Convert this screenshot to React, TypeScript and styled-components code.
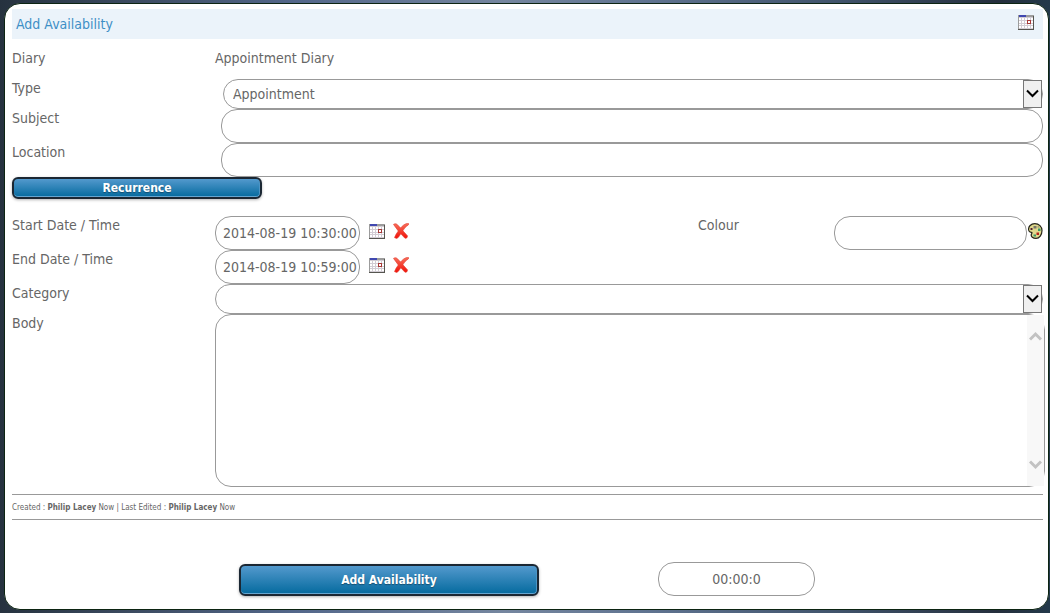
import React from "react";
import styled, { createGlobalStyle, css } from "styled-components";

const line = "#999999";

const GlobalStyle = createGlobalStyle`
  *, *::before, *::after { box-sizing: border-box; }
  body {
    margin: 0;
    background: linear-gradient(90deg, #26323f 0%, #3b4a5f 12%, #53678a 28%, #75869f 48%, #5f7390 62%, #40536b 80%, #252f3d 95%, #23394a 100%);
    color: #666666;
    font: 14px/18px "DejaVu Sans Condensed", Tahoma, sans-serif;
  }
  input, select, textarea, button { font: inherit; color: inherit; margin: 0; }
`;

const Page = styled.main`
  display: flex;
  flex-direction: column;
  min-height: 100vh;
  padding: 3px 1px 3px 4px;
`;

const Panel = styled.form`
  flex: 1;
  padding: 5px 5px 12px 7px;
  background: #ffffff;
  border: 1px solid #0c2412;
  border-radius: 16px;
`;

const Header = styled.header`
  display: flex;
  align-items: center;
  justify-content: space-between;
  height: 30px;
  padding: 0 9px 0 4px;
  margin-bottom: 10px;
  background: #ebf3fa;
`;

const Title = styled.h1`
  margin: 0;
  font-size: 14px;
  font-weight: 400;
  color: #3d8fc6;
`;

const Row = styled.div<{ $split?: boolean }>`
  display: grid;
  grid-template-columns: ${(p) => (p.$split ? "203px 1fr 136px 209px" : "203px 1fr")};
`;

const Label = styled.label``;

const Value = styled.output`
  height: 30px;
`;

const Cell = styled.div<{ $indent?: number }>`
  display: flex;
  position: relative;
  min-width: 0;
  padding-left: ${(p) => p.$indent ?? 0}px;
`;

const field = css`
  background: transparent;
  border: 1px solid ${line};
  border-radius: 16px;
  outline: none;
`;

const TextInput = styled.input<{ $width?: number; $center?: boolean }>`
  ${field}
  flex: ${(p) => (p.$width ? "none" : "1")};
  width: ${(p) => (p.$width ? `${p.$width}px` : "auto")};
  min-width: 0;
  height: 34px;
  padding: ${(p) => (p.$center ? "0 7px" : "0 1px 0 7px")};
  text-align: ${(p) => (p.$center ? "center" : "left")};
`;

const Select = styled.select`
  ${field}
  appearance: none;
  flex: 1;
  min-width: 0;
  height: 30px;
  padding: 0 28px 0 9px;
`;

const Arrow = styled.span`
  position: absolute;
  top: 1px;
  right: 1px;
  display: grid;
  justify-items: center;
  padding-top: 6px;
  width: 19px;
  height: 28px;
  background: #f0f0f0;
  border: 1px solid #777777;
  color: #000000;
  pointer-events: none;
`;

const Body = styled.textarea`
  ${field}
  flex: 1;
  height: 173px;
  margin-right: -2px;
  padding: 8px 24px 8px 8px;
  resize: none;
  overflow: hidden;
`;

const ScrollTrack = styled.span`
  position: absolute;
  top: 1px;
  bottom: 1px;
  right: -1px;
  display: flex;
  flex-direction: column;
  justify-content: space-between;
  align-items: center;
  width: 17px;
  padding: 15px 0;
  background: #f8f8f8;
  color: #c2c2c2;
  pointer-events: none;
`;

const IconButton = styled.button`
  display: block;
  flex: none;
  width: 16px;
  height: 16px;
  padding: 0;
  background: none;
  border: 0;
  cursor: pointer;
  svg { display: block; }
`;

const HeaderIcon = styled(IconButton)`
  margin-bottom: 4px;
`;

const FieldIcons = styled.div<{ $gap: number }>`
  display: flex;
  gap: 8px;
  padding: 7px 0 0 ${(p) => p.$gap}px;
`;

const PrimaryButton = styled.button<{ $width: number; $height: number }>`
  width: ${(p) => p.$width}px;
  height: ${(p) => p.$height}px;
  padding: 0;
  border: 2px solid #1b2733;
  border-radius: 6px;
  background: linear-gradient(#5399cd, #046a9e);
  box-shadow: inset 0 -1px 0 #66a5cf, inset -1px 0 0 #4b94c4, 0 1px 3px rgba(0, 0, 0, 0.3);
  color: #ffffff;
  font-size: 12px;
  font-weight: 700;
  line-height: 16px;
  text-shadow: 0 1px 1px rgba(0, 0, 0, 0.35);
  cursor: pointer;
`;

const Recurrence = styled.div`
  display: flex;
  margin-bottom: 17px;
`;

const Audit = styled.p`
  margin: 7px 0 42px;
  padding: 4px 0 2px;
  height: 26px;
  border: solid ${line};
  border-width: 1px 0;
  font-size: 8px;
`;

const Actions = styled.footer`
  display: flex;
  align-items: flex-end;
  justify-content: center;
  gap: 119px;
  padding-right: 1px;
`;

const CalendarIcon = () => (
  <svg width="16" height="16" viewBox="0 0 16 16" shapeRendering="crispEdges" aria-hidden="true">
    <path fill="#d2ccd4" d="M0 1h16v14H0z" />
    <path fill="#9c9c9c" d="M0 1h16v2H0zM0 1h1v14H0z" />
    <path fill="#4048b0" d="M1 1h7v2H1z" />
    <path fill="#ffffff" d="M1 4h2v2H1zM4 4h2v2H4zM7 4h2v2H7zM10 4h2v2h-2zM13 4h2v2h-2zM1 7h2v2H1zM4 7h2v2H4zM7 7h2v2H7zM10 7h2v2h-2zM13 7h2v2h-2zM1 10h2v1H1zM4 10h2v1H4zM7 10h2v1H7zM10 10h2v1h-2zM13 10h2v1h-2zM1 12h2v2H1zM4 12h2v2H4zM7 12h2v2H7zM10 12h2v2h-2zM13 12h2v2h-2z" />
    <path fill="#55554f" d="M15 2h1v14H0v-1h15z" />
    <path fill="#a83a38" fillRule="evenodd" d="M9 6h4v4H9zM10 7v2h2V7z" />
  </svg>
);

const DeleteIcon = () => (
  <svg width="16" height="16" viewBox="0 0 16 16" aria-hidden="true">
    <defs>
      <linearGradient id="cross" x1="0" y1="0" x2="0" y2="1">
        <stop offset="0" stopColor="#f8705c" />
        <stop offset="1" stopColor="#f01008" />
      </linearGradient>
    </defs>
    <path
      fill="url(#cross)"
      stroke="#e2382a"
      strokeWidth=".6"
      d="M.5 1.400C1.800.4 3.300.6 4.300 1.600L7.500 5C9.500 2.600 11.900.8 14.200.4L15.700.6 15.300 2C13 3.300 11.200 5.500 9.900 7.800L14.600 12.900 13.800 15 12 15.300 7.800 10.800C6.500 12.700 5.200 15 3.700 15.600L1.500 14.600C2.300 12.300 3.600 10.100 5.300 8Z"
    />
  </svg>
);

const PaletteIcon = () => (
  <svg width="16" height="16" viewBox="0 0 16 16" aria-hidden="true">
    <path
      fill="#e0d98c"
      stroke="#25251a"
      strokeWidth="1.200"
      d="M.6 7C.2 3.400 3 .7 6.800.7c4.200 0 7.200 2.900 7.200 6.900 0 4.200-2.600 7.700-6 7.700-3.200 0-5.200-1.700-4.700-3.800.2-.9.900-1.300.6-1.900C3.200 9.200 1 9.700.6 7Z"
    />
    <path fill="#77746a" d="M5.500 3h3v2.500h-3z" />
    <path fill="#522033" d="M2.500 5h2v2h-2z" />
    <path fill="#3a9a68" d="M10 5.500h2.500V8H10zM5.500 11.500H8V13.500H5.500z" />
    <path fill="#b5221c" d="M8.500 9.500H11V12H8.500z" />
    <path fill="#a09c74" d="M9.500 3.200h2v1.500h-2z" />
  </svg>
);

const Chevron = ({ up, weight = 2 }: { up?: boolean; weight?: number }) => (
  <svg width="13" height="13" viewBox="0 0 13 13" fill="none" stroke="currentColor" strokeWidth={weight} aria-hidden="true">
    <path d={up ? "M1 9.500 6.500 4 12 9.500" : "M1 3.500 6.500 9 12 3.500"} />
  </svg>
);

const DateRow = ({ id, label, value, children }: { id: string; label: string; value: string; children?: React.ReactNode }) => (
  <Row $split>
    <Label htmlFor={id}>{label}</Label>
    <Cell>
      <TextInput id={id} defaultValue={value} $width={145} />
      <FieldIcons $gap={9}>
        <IconButton type="button" aria-label={`Pick ${label}`}><CalendarIcon /></IconButton>
        <IconButton type="button" aria-label={`Clear ${label}`}><DeleteIcon /></IconButton>
      </FieldIcons>
    </Cell>
    {children}
  </Row>
);

export default function App() {
  return (
    <>
      <GlobalStyle />
      <Page>
        <Panel onSubmit={(e) => e.preventDefault()}>
          <Header>
            <Title>Add Availability</Title>
            <HeaderIcon type="button" aria-label="Calendar"><CalendarIcon /></HeaderIcon>
          </Header>
          <Row>
            <Label htmlFor="diary">Diary</Label>
            <Value id="diary">Appointment Diary</Value>
          </Row>
          <Row>
            <Label htmlFor="type">Type</Label>
            <Cell $indent={8}>
              <Select id="type"><option>Appointment</option></Select>
              <Arrow><Chevron /></Arrow>
            </Cell>
          </Row>
          <Row>
            <Label htmlFor="subject">Subject</Label>
            <Cell $indent={6}><TextInput id="subject" /></Cell>
          </Row>
          <Row>
            <Label htmlFor="location">Location</Label>
            <Cell $indent={6}><TextInput id="location" /></Cell>
          </Row>
          <Recurrence>
            <PrimaryButton type="button" $width={250} $height={22}>Recurrence</PrimaryButton>
          </Recurrence>
          <DateRow id="start" label="Start Date / Time" value="2014-08-19 10:30:00">
            <Label htmlFor="colour">Colour</Label>
            <Cell>
              <TextInput id="colour" $width={193} />
              <FieldIcons $gap={1}>
                <IconButton type="button" aria-label="Pick colour"><PaletteIcon /></IconButton>
              </FieldIcons>
            </Cell>
          </DateRow>
          <DateRow id="end" label="End Date / Time" value="2014-08-19 10:59:00" />
          <Row>
            <Label htmlFor="category">Category</Label>
            <Cell>
              <Select id="category"><option></option></Select>
              <Arrow><Chevron /></Arrow>
            </Cell>
          </Row>
          <Row>
            <Label htmlFor="body">Body</Label>
            <Cell>
              <Body id="body" />
              <ScrollTrack><Chevron up weight={3} /><Chevron weight={3} /></ScrollTrack>
            </Cell>
          </Row>
          <Audit>
            Created : <b>Philip Lacey</b> Now | Last Edited : <b>Philip Lacey</b> Now
          </Audit>
          <Actions>
            <PrimaryButton type="submit" $width={300} $height={32}>Add Availability</PrimaryButton>
            <TextInput aria-label="Duration" defaultValue="00:00:0" $width={157} $center />
          </Actions>
        </Panel>
      </Page>
    </>
  );
}
